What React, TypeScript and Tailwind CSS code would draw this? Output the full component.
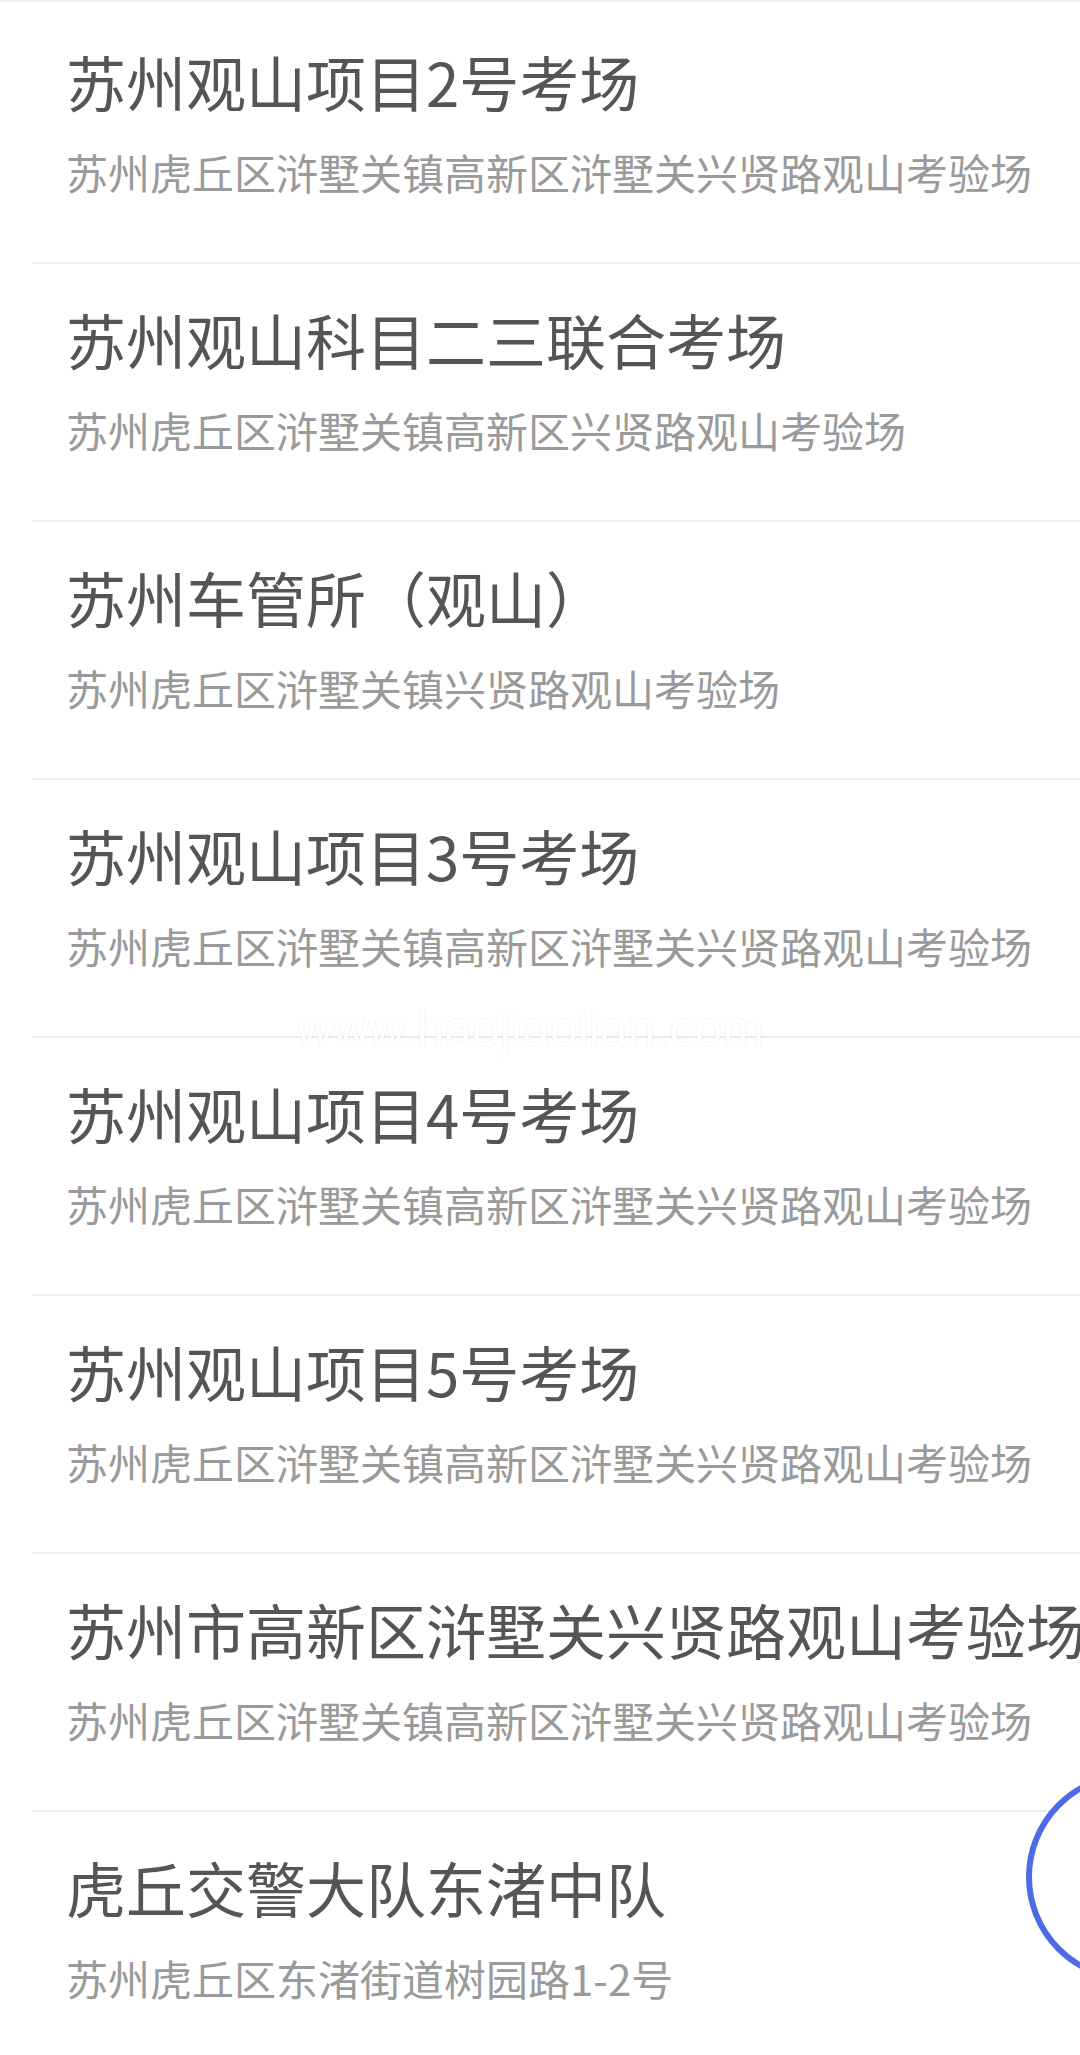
const rows = [
  { name: '苏州观山项目2号考场', addr: '苏州虎丘区浒墅关镇高新区浒墅关兴贤路观山考验场' },
  { name: '苏州观山科目二三联合考场', addr: '苏州虎丘区浒墅关镇高新区兴贤路观山考验场' },
  { name: '苏州车管所（观山）', addr: '苏州虎丘区浒墅关镇兴贤路观山考验场' },
  { name: '苏州观山项目3号考场', addr: '苏州虎丘区浒墅关镇高新区浒墅关兴贤路观山考验场' },
  { name: '苏州观山项目4号考场', addr: '苏州虎丘区浒墅关镇高新区浒墅关兴贤路观山考验场' },
  { name: '苏州观山项目5号考场', addr: '苏州虎丘区浒墅关镇高新区浒墅关兴贤路观山考验场' },
  { name: '苏州市高新区浒墅关兴贤路观山考验场', addr: '苏州虎丘区浒墅关镇高新区浒墅关兴贤路观山考验场' },
  { name: '虎丘交警大队东渚中队', addr: '苏州虎丘区东渚街道树园路1-2号' },
];

const font = "font-['Noto_Sans_CJK_SC','Noto_Sans',sans-serif]";

export default function App() {
  return (
    <div className={`relative min-h-[2055px] w-[1080px] overflow-hidden bg-white ${font}`}>
      <div className="h-[2px] w-full bg-[#ececec]" />
      <ul>
        {rows.map((row, i) => (
          <li
            key={i}
            className={i === 0 ? 'pt-[39px] pb-[62px]' : 'ml-[32px] border-t-2 border-[#ececec] pt-[35px] pb-[62px]'}
          >
            <div className={i === 0 ? 'pl-[66px]' : 'pl-[34px]'}>
              <div className="whitespace-nowrap text-[60px] leading-[80px] text-[#555555]">
                {row.name}
              </div>
              <div className="mt-[23px] whitespace-nowrap text-[42px] leading-[56px] text-[#9a9a9a]">
                {row.addr}
              </div>
            </div>
          </li>
        ))}
      </ul>

      {/* watermark */}
      <div className="pointer-events-none absolute left-[297px] top-[1004px] font-['Liberation_Sans',Arial,sans-serif] text-[50px] leading-[50px] text-white [text-shadow:0_0_2px_rgba(0,0,0,0.1)]">
        www.haojiaolian.com
      </div>

      {/* floating button */}
      <div className="absolute left-[1026px] top-[1772px] h-[210px] w-[210px] rounded-full border-[6px] border-[#4d6be3] bg-white" />
    </div>
  );
}
